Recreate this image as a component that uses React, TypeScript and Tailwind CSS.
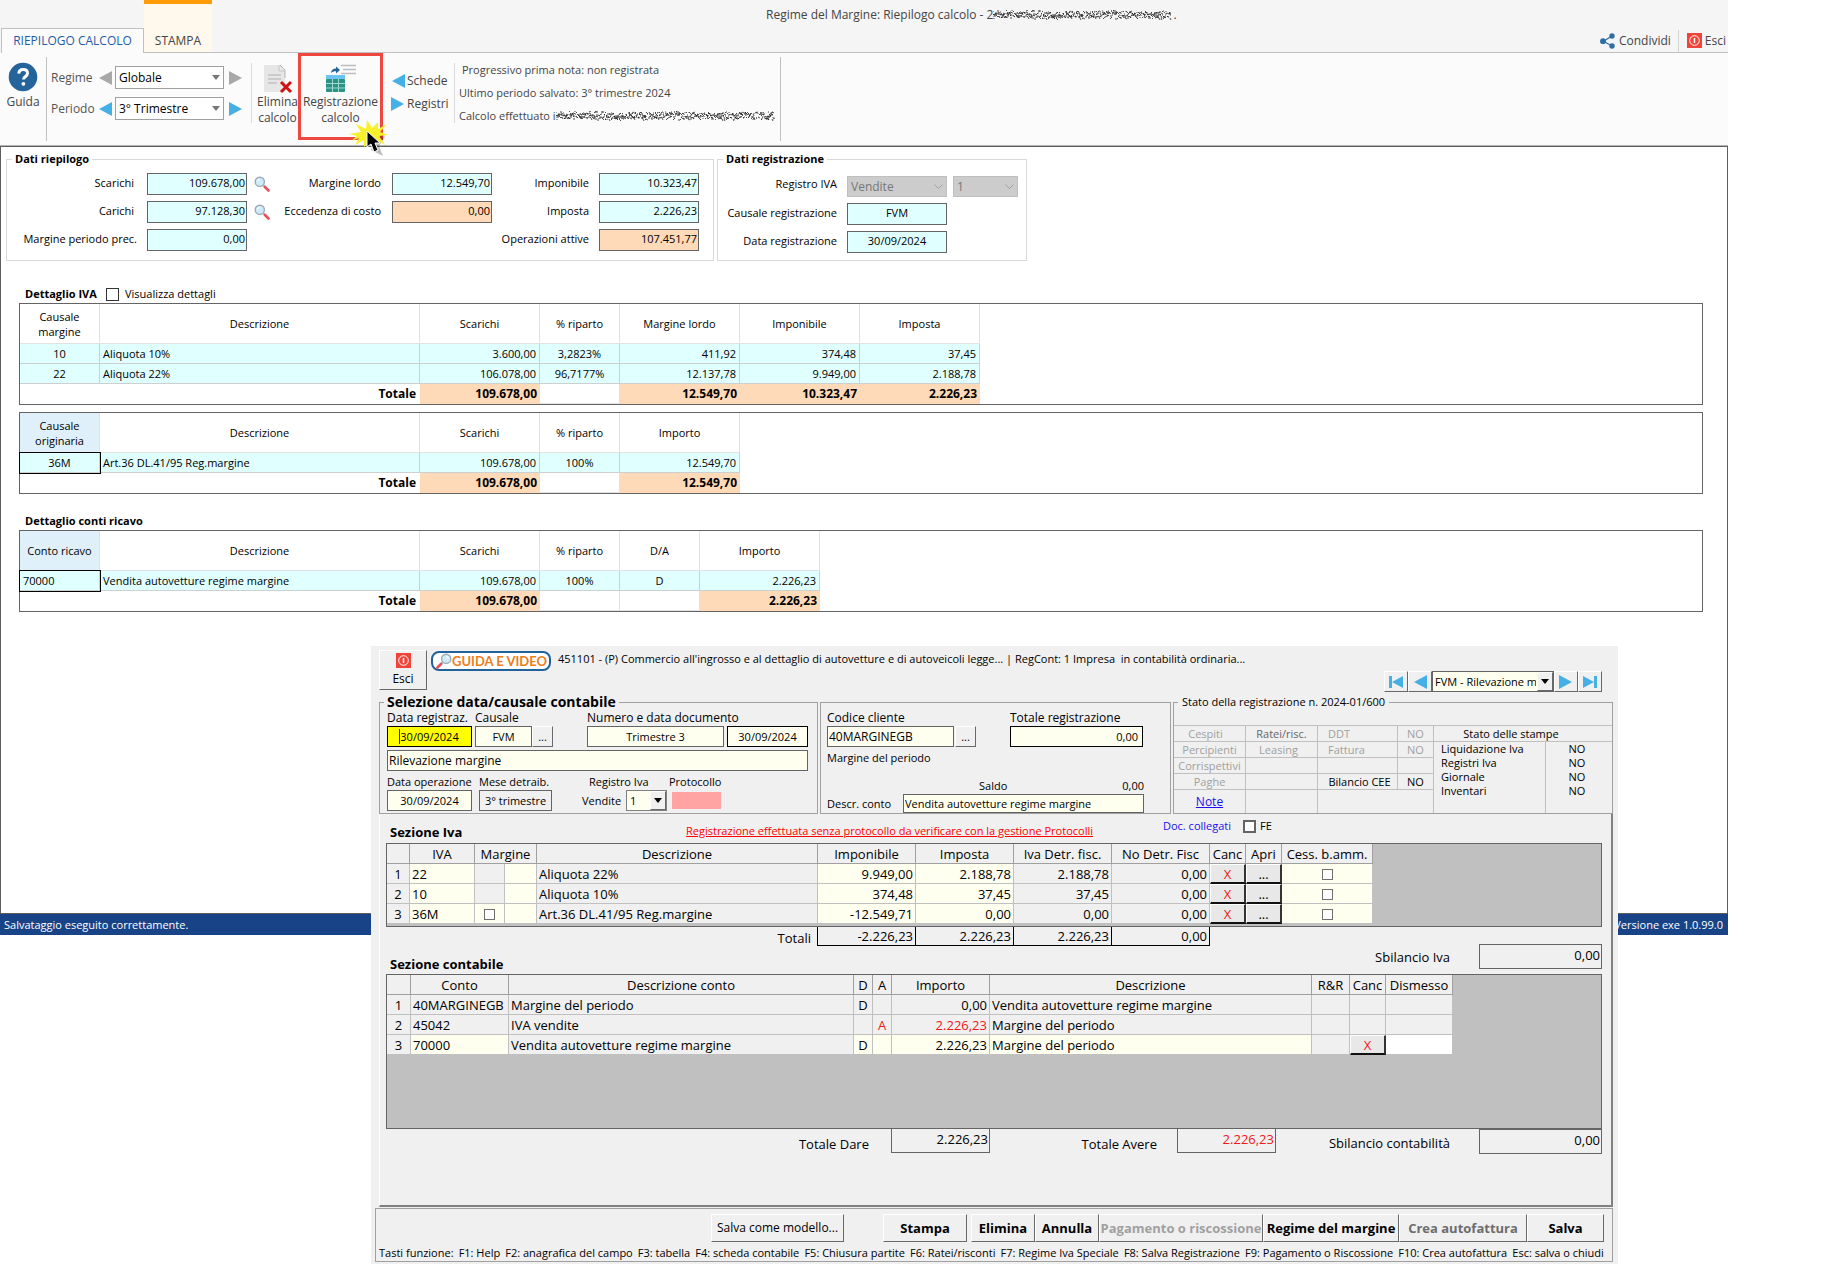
import React from 'react';

type Align = 'left' | 'center' | 'right';

const alignClass: Record<Align, string> = {
  left: 'text-left',
  center: 'text-center',
  right: 'text-right',
};

const raised = 'border border-t-white border-l-white border-r-[#696969] border-b-[#696969] bg-[#f0f0f0]';

/* ---------- Icons ---------- */

function Arrow({ dir, color = '#45b0e6', bar = false }: { dir: 'left' | 'right'; color?: string; bar?: boolean }) {
  return (
    <svg width="16" height="14" viewBox="0 0 16 14" className={dir === 'left' ? 'shrink-0' : 'shrink-0 rotate-180'} aria-hidden="true">
      <path d={bar ? 'M15 1v12L4 7z' : 'M15 0v14L2 7z'} fill={color} />
      {bar && <rect x="1" y="1" width="3" height="12" fill={color} />}
    </svg>
  );
}

function Magnifier() {
  return (
    <svg width="16" height="16" viewBox="0 0 16 16" aria-hidden="true">
      <path d="M9.500 9.500l2 2" stroke="#9aa7b0" strokeWidth="2" />
      <path d="M11 11l3.500 3.500" stroke="#e8505b" strokeWidth="2.600" strokeLinecap="round" />
      <circle cx="5.800" cy="5.800" r="4.600" fill="#cfeaf8" stroke="#9aa9b5" strokeWidth="1.400" />
      <path d="M3.500 5.200c.4-1.200 1.300-1.800 2.400-1.900" stroke="#fff" strokeWidth="1.200" fill="none" />
    </svg>
  );
}

// Same lens, handle pointing the other way
function GuideMagnifier() {
  return (
    <span className="-scale-x-100">
      <Magnifier />
    </span>
  );
}

function PowerIcon() {
  return (
    <svg width="15" height="15" viewBox="0 0 15 15" className="shrink-0" aria-hidden="true">
      <rect width="15" height="15" fill="#f0433a" />
      <circle cx="7.500" cy="7.500" r="4.800" fill="none" stroke="#fff" strokeWidth="1" />
      <path d="M7.500 5v5" stroke="#fff" strokeWidth="1.500" />
    </svg>
  );
}

function HelpIcon() {
  return (
    <svg width="30" height="30" viewBox="0 0 30 30" aria-hidden="true">
      <circle cx="15" cy="15" r="14.300" fill="#25639b" />
      <path d="M10.800 11.600c.1-2.600 1.900-4.100 4.400-4.100 2.600 0 4.300 1.400 4.300 3.700 0 3.200-4 3.300-4 6.300" fill="none" stroke="#fff" strokeWidth="3" />
      <circle cx="15.400" cy="21.800" r="1.900" fill="#fff" />
    </svg>
  );
}

function ShareIcon() {
  return (
    <svg width="16" height="16" viewBox="0 0 16 16" aria-hidden="true">
      <path d="M12 3L3.500 8.200 12 13" fill="none" stroke="#2a6ea5" strokeWidth="1.200" />
      <circle cx="12" cy="3" r="2.700" fill="#2a6ea5" />
      <circle cx="3" cy="8.200" r="2.900" fill="#2a6ea5" />
      <circle cx="12" cy="13" r="2.700" fill="#2a6ea5" />
    </svg>
  );
}

function DeleteDocIcon() {
  return (
    <svg width="30" height="30" viewBox="0 0 30 30" aria-hidden="true">
      <path d="M1 1h16l5 5v22H1z" fill="#e6e6e6" />
      <path d="M17 1l5 5v8" fill="none" stroke="#b5b5b5" />
      <path d="M16 1v6h6" fill="none" stroke="#c8c8c8" />
      <path d="M5 11h13M5 15h13M5 19h9" stroke="#b3adb3" />
      <path d="M18 18l10 10M28 18L18 28" stroke="#d31010" strokeWidth="3" />
    </svg>
  );
}

function RegisterIcon() {
  return (
    <svg width="32" height="30" viewBox="0 0 32 30" aria-hidden="true">
      <path d="M16 1.500h15M18 5.500h13M16 9.500h15" stroke="#b9bcc0" strokeWidth="1.400" />
      <path d="M6 9c.3-3 2-4.500 5-4.500V2.500l4 3.500-4 3.500V7.300C9 7.200 7.500 7.700 6 9z" fill="#25639b" />
      <rect x="1" y="11" width="19" height="4" fill="#6cc5f0" />
      <rect x="1" y="15" width="19" height="13" rx="1" fill="#2a9385" />
      <path d="M1 19.500h19M1 24h19M7.500 15v13M13.500 15v13" stroke="#9fd8cf" />
    </svg>
  );
}

function ClickBurst() {
  return (
    <svg width="42" height="38" viewBox="0 0 42 38" className="absolute left-[49px] top-[66px] z-10" aria-hidden="true">
      <path d="M30 10l8 8-6 9 4 10-12-6z" fill="#000" opacity=".25" />
      <path
        d="M2 15l12-2-5-8 10 5 1-9 5 8 6-6 0 7 9-5-7 8 8 3-9 1 6 9-9-5-1 8-5-7-6 6 0-7-9 5 4-7-8 3 6-5z"
        fill="#f7f02a"
      />
      <path d="M20 12v16l4-3 3 8 4-2-3-7h5z" fill="#000" stroke="#fff" strokeWidth="1" />
    </svg>
  );
}

// Dense strokes used to black out private text
function Scribble({ width }: { width: number }) {
  let state = 12345;
  const rand = () => {
    state = (Math.imul(state, 1664525) + 1013904223) >>> 0;
    return state / 4294967296;
  };
  const strokes: string[] = [];
  for (let x = 0; x < width - 2; x++) {
    for (let n = 0; n < 3; n++) {
      const y = Math.round(rand() * 7) + 1;
      strokes.push(`M${x} ${y}l${Math.round(rand() * 2)} ${Math.round(rand() * 3 - 1)}`);
    }
  }
  return (
    <svg width={width} height="11" viewBox={`0 0 ${width} 11`} className="shrink-0" aria-hidden="true">
      <path d={strokes.join('')} stroke="#222" strokeWidth="0.800" fill="none" />
    </svg>
  );
}

/* ---------- Small controls ---------- */

function Caret({ className = '' }: { className?: string }) {
  return (
    <svg width="8" height="5" viewBox="0 0 8 5" className={className} aria-hidden="true">
      <path d="M0 0h8L4 5z" fill="currentColor" />
    </svg>
  );
}

function RibbonSelect({ label, value, prev }: { label: string; value: string; prev: string }) {
  const id = `rib-${label}`;
  return (
    <div className="flex items-center h-[23px]">
      <label htmlFor={id} className="w-[46px] text-[#555]">{label}</label>
      <button type="button" aria-label={`${label} precedente`}><Arrow dir="left" color={prev} /></button>
      <div className="relative ml-[2px] mr-1">
        <select id={id} className="appearance-none w-[109px] h-[23px] border border-[#a0a0a0] bg-white pl-[3px] text-black">
          <option>{value}</option>
        </select>
        <Caret className="absolute right-1 top-[9px] text-[#777]" />
      </div>
      <button type="button" aria-label={`${label} successivo`}><Arrow dir="right" color={prev} /></button>
    </div>
  );
}

function Field({ id, label, value, labelClass, tone = 'bg-[#e0ffff]', align = 'right', zoom = false }: {
  id: string; label: string; value: string; labelClass: string; tone?: string; align?: Align; zoom?: boolean;
}) {
  return (
    <div className="flex items-center h-[22px]">
      <label htmlFor={id} className={`${labelClass} pb-[2px] text-right whitespace-nowrap`}>{label}</label>
      <input id={id} defaultValue={value} className={`w-[100px] h-[22px] border border-[#646464] px-[1px] pb-1 ${tone} ${alignClass[align]}`} />
      {zoom && <button type="button" aria-label={`Cerca ${label}`} className="ml-[7px]"><Magnifier /></button>}
    </div>
  );
}

/* ---------- Summary grids ---------- */

interface SummaryCol {
  label: string;
  width: number;
  align: Align;
}

function SummaryTable({ cols, rows, totals, focusFirst = false }: {
  cols: SummaryCol[]; rows: string[][]; totals: string[]; focusFirst?: boolean;
}) {
  const width = cols.reduce((sum, c) => sum + c.width, 0);
  return (
    <div className="border border-[#646464]">
      <table className="table-fixed border-separate border-spacing-0" style={{ width }}>
        <colgroup>{cols.map((c, i) => <col key={i} style={{ width: c.width }} />)}</colgroup>
        <thead>
          <tr className="h-10">
            {cols.map((c, i) => (
              <th key={i} className={`border-r border-b border-[#e2e2e2] font-normal leading-[15px] p-0 ${focusFirst && i === 0 ? 'bg-[#dff0fa]' : ''}`}>
                {c.label}
              </th>
            ))}
          </tr>
        </thead>
        <tbody>
          {rows.map((row) => (
            <tr key={row[0]} className="h-5 bg-[#e0ffff]">
              {row.map((cell, i) => (
                <td key={i} className={`border-r border-b border-[#ccd0d0] leading-[19px] py-0 px-[3px] whitespace-nowrap ${alignClass[cols[i].align]} ${focusFirst && i === 0 ? 'outline outline-black' : ''}`}>
                  {cell}
                </td>
              ))}
            </tr>
          ))}
          <tr className="h-5 text-xs font-bold">
            <td colSpan={2} className="text-right leading-[19px] pt-0 pb-px pr-1">Totale</td>
            {totals.map((t, i) => (
              <td key={i} className={`text-right leading-[19px] pt-0 px-[3px] ${t ? 'pb-px bg-[#ffdab9]' : 'pb-0 border-r border-b border-[#e2e2e2]'}`}>{t}</td>
            ))}
          </tr>
        </tbody>
      </table>
    </div>
  );
}

const baseCols = (first: string, firstAlign: Align = 'center'): SummaryCol[] => [
  { label: first, width: 80, align: firstAlign },
  { label: 'Descrizione', width: 320, align: 'left' },
  { label: 'Scarichi', width: 120, align: 'right' },
  { label: '% riparto', width: 80, align: 'center' },
];

/* ---------- Main window ---------- */

function Ribbon() {
  return (
    <header className="text-xs text-[#444]">
      <div className="flex h-[53px] bg-[#f5f5f5]">
        <nav className="flex items-end pl-px">
          <button type="button" className="relative h-[25px] w-[143px] border border-b-0 border-[#c0c0c0] bg-[#fbfbfb] text-[#1f5ba6]">RIEPILOGO CALCOLO</button>
          <button type="button" className="h-[53px] w-[68px] border-t-4 border-t-[#ff9c08] border-b border-b-[#c0c0c0] bg-[#fff8ec] pt-[26px]">STAMPA</button>
        </nav>
        <div className="flex-1 flex justify-between border-b border-[#c0c0c0] pl-[554px]">
          <h1 className="flex h-[30px] items-center whitespace-pre">Regime del Margine: Riepilogo calcolo - 2<Scribble width={180} />.</h1>
          <div className="flex items-center self-end h-[23px] pr-[2px]">
            <button type="button" className="flex items-center gap-[3px] pr-[7px]"><ShareIcon />Condividi</button>
            <button type="button" className="flex items-center gap-[3px] border-l border-[#d4d4d4] pl-2 h-[22px]"><PowerIcon />Esci</button>
          </div>
        </div>
      </div>
      <div className="flex items-start h-[93px] bg-[#fbfbfb] border-b border-[#b4b4b4]">
        <button type="button" className="flex w-[46px] flex-col items-center pt-[9px] leading-[16px]">
          <HelpIcon /><span className="mt-[2px]">Guida</span>
        </button>
        <div className="mt-1 h-[84px] w-px bg-[#c0c0c0]" />
        <div className="flex flex-col gap-2 pl-1 pr-[7px] pt-[13px]">
          <RibbonSelect label="Regime" value="Globale" prev="#a8a8a8" />
          <RibbonSelect label="Periodo" value="3° Trimestre" prev="#45b0e6" />
        </div>
        <div className="mt-[10px] h-[60px] w-px bg-[#dadada]" />
        <button type="button" className="flex w-[46px] flex-col items-center pl-[5px] pt-[11px] leading-[16px] whitespace-nowrap">
          <DeleteDocIcon /><span>Elimina</span><span>calcolo</span>
        </button>
        <div className="relative w-[85px]">
          <button type="button" className="flex w-full h-[87px] flex-col items-center border-[3px] border-[#ee4740] pt-2 leading-[16px] whitespace-nowrap">
            <RegisterIcon /><span>Registrazione</span><span>calcolo</span>
          </button>
          <ClickBurst />
        </div>
        <div className="flex flex-col gap-[7px] pl-[7px] w-[71px] pt-5 leading-[16px]">
          <button type="button" className="flex items-center gap-px"><Arrow dir="left" />Schede</button>
          <button type="button" className="flex items-center gap-px"><Arrow dir="right" />Registri</button>
        </div>
        <div className="mt-[10px] h-[60px] w-px bg-[#dadada]" />
        <div className="flex flex-col gap-[7px] pl-1 pt-[9px] w-[325px] text-[11px] leading-[16px] whitespace-nowrap">
          <p className="pl-[3px]">Progressivo prima nota: non registrata</p>
          <p>Ultimo periodo salvato: 3° trimestre 2024</p>
          <p className="flex items-center">Calcolo effettuato i<Scribble width={220} /></p>
        </div>
        <div className="mt-1 h-[84px] w-px bg-[#c0c0c0]" />
      </div>
    </header>
  );
}

function MainWindow() {
  return (
    <div className="mr-[102px]">
      <Ribbon />
      <main className="border border-[#5e5e5e] pt-1 pb-[301px]">
        <div className="flex gap-[3px] pl-[5px]">
          <fieldset className="flex border border-[#d9d9d9] pt-[6px] pb-[9px] pr-[14px]">
            <legend className="ml-[5px] h-4 px-[3px] font-bold leading-4">Dati riepilogo</legend>
            <div className="flex">
              <div className="flex flex-col gap-[6px]">
                <Field id="scarichi" label="Scarichi" value="109.678,00" labelClass="w-[127px] mr-[13px]" zoom />
                <Field id="carichi" label="Carichi" value="97.128,30" labelClass="w-[127px] mr-[13px]" zoom />
                <Field id="marg-prec" label="Margine periodo prec." value="0,00" labelClass="w-[130px] mr-[10px]" />
              </div>
              <div className="flex flex-col gap-[6px]">
                <Field id="marg-lordo" label="Margine lordo" value="12.549,70" labelClass="w-[111px] mr-[11px]" />
                <Field id="eccedenza" label="Eccedenza di costo" value="0,00" labelClass="w-[111px] mr-[11px]" tone="bg-[#ffdab9]" />
              </div>
              <div className="flex flex-col gap-[6px]">
                <Field id="imponibile" label="Imponibile" value="10.323,47" labelClass="w-[97px] mr-[10px]" />
                <Field id="imposta" label="Imposta" value="2.226,23" labelClass="w-[97px] mr-[10px]" />
                <Field id="op-attive" label="Operazioni attive" value="107.451,77" labelClass="w-[97px] mr-[10px]" tone="bg-[#ffdab9]" />
              </div>
            </div>
          </fieldset>
          <fieldset className="border border-[#d9d9d9] pt-[9px] pr-2">
            <legend className="ml-[5px] h-4 px-[3px] font-bold leading-4">Dati registrazione</legend>
            <div className="flex flex-col gap-[6px]">
              <div className="flex items-start h-[21px] text-xs text-[#777]">
                <label htmlFor="registro" className="w-[119px] mr-[10px] text-right text-[11px] leading-4 text-black">Registro IVA</label>
                <div className="relative mr-[6px]">
                  <select id="registro" disabled className="appearance-none w-[100px] h-[21px] border border-[#bfbfbf] bg-[#ccc] pl-[3px]">
                    <option>Vendite</option>
                  </select>
                  <svg width="9" height="6" viewBox="0 0 9 6" className="absolute right-1 top-2" aria-hidden="true"><path d="M0.500 0.500l4 4 4-4" fill="none" stroke="#a0a0a0" /></svg>
                </div>
                <div className="relative">
                  <select disabled aria-label="Numero registro" className="appearance-none w-[65px] h-[21px] border border-[#bfbfbf] bg-[#ccc] pl-[3px]">
                    <option>1</option>
                  </select>
                  <svg width="9" height="6" viewBox="0 0 9 6" className="absolute right-1 top-2" aria-hidden="true"><path d="M0.500 0.500l4 4 4-4" fill="none" stroke="#a0a0a0" /></svg>
                </div>
              </div>
              <Field id="causale-reg" label="Causale registrazione" value="FVM" labelClass="w-[119px] mr-[10px]" align="center" />
              <Field id="data-reg" label="Data registrazione" value="30/09/2024" labelClass="w-[119px] mr-[10px]" align="center" />
            </div>
          </fieldset>
        </div>

        <div className="pl-[18px] pr-6 pt-[25px]">
          <div className="flex items-center h-4 mb-px pl-[6px]">
            <h2 className="w-[81px] font-bold whitespace-nowrap">Dettaglio IVA</h2>
            <label className="flex items-center gap-[6px]">
              <input type="checkbox" className="appearance-none size-[13px] border border-[#333] bg-white" />
              Visualizza dettagli
            </label>
          </div>
          <SummaryTable
            cols={[
              ...baseCols('Causale margine'),
              { label: 'Margine lordo', width: 120, align: 'right' },
              { label: 'Imponibile', width: 120, align: 'right' },
              { label: 'Imposta', width: 120, align: 'right' },
            ]}
            rows={[
              ['10', 'Aliquota 10%', '3.600,00', '3,2823%', '411,92', '374,48', '37,45'],
              ['22', 'Aliquota 22%', '106.078,00', '96,7177%', '12.137,78', '9.949,00', '2.188,78'],
            ]}
            totals={['109.678,00', '', '12.549,70', '10.323,47', '2.226,23']}
          />
          <div className="mt-[7px]">
            <SummaryTable
              focusFirst
              cols={[...baseCols('Causale originaria'), { label: 'Importo', width: 120, align: 'right' }]}
              rows={[['36M', 'Art.36 DL.41/95 Reg.margine', '109.678,00', '100%', '12.549,70']]}
              totals={['109.678,00', '', '12.549,70']}
            />
          </div>
          <h2 className="mt-[19px] mb-px h-4 pl-[6px] font-bold leading-4">Dettaglio conti ricavo</h2>
          <SummaryTable
            focusFirst
            cols={[
              ...baseCols('Conto ricavo', 'left'),
              { label: 'D/A', width: 80, align: 'center' },
              { label: 'Importo', width: 120, align: 'right' },
            ]}
            rows={[['70000', 'Vendita autovetture regime margine', '109.678,00', '100%', 'D', '2.226,23']]}
            totals={['109.678,00', '', '', '2.226,23']}
          />
        </div>
      </main>
      <footer className="flex h-[21px] items-center justify-between bg-[#184487] pl-1 pr-[5px] text-white">
        <span>Salvataggio eseguito correttamente.</span>
        <span>Versione exe 1.0.99.0</span>
      </footer>
    </div>
  );
}

/* ---------- Accounting entry window ---------- */

function NavButton({ label, children }: { label: string; children: React.ReactNode }) {
  return (
    <button type="button" aria-label={label} className={`flex h-[21px] w-6 items-center justify-center ${raised}`}>{children}</button>
  );
}

function EntryHeader() {
  return (
    <div className="flex h-12 items-start pl-2 pr-4 pt-1">
      <button type="button" className={`flex h-10 w-12 shrink-0 flex-col items-center pt-[2px] text-xs ${raised}`}>
        <PowerIcon /><span className="mt-[2px] leading-[18px]">Esci</span>
      </button>
      <button type="button" className="ml-1 mt-px flex h-5 w-[120px] shrink-0 items-center rounded-lg border-2 border-[#22629c] bg-white pl-[3px] font-[Lato] text-[13px] font-bold leading-4 text-[#ee7d18] whitespace-nowrap">
        <GuideMagnifier />GUIDA E VIDEO
      </button>
      <p className="ml-[7px] mt-[1px] leading-4 whitespace-pre">451101 - (P) Commercio all'ingrosso e al dettaglio di autovetture e di autoveicoli legge... | RegCont: 1 Impresa  in contabilità ordinaria...</p>
      <div className="ml-auto mt-[21px] flex shrink-0">
        <NavButton label="Primo"><Arrow dir="left" bar /></NavButton>
        <NavButton label="Precedente"><Arrow dir="left" /></NavButton>
        <div className="relative">
          <select aria-label="Registrazione" className="appearance-none h-[21px] w-[122px] overflow-hidden border border-[#646464] bg-[#fffff0] pl-[2px] pr-[17px]">
            <option>FVM - Rilevazione margine</option>
          </select>
          <span className={`pointer-events-none absolute right-[1px] top-[1px] flex h-[19px] w-4 items-center justify-center ${raised}`}><Caret /></span>
        </div>
        <NavButton label="Successivo"><Arrow dir="right" /></NavButton>
        <NavButton label="Ultimo"><Arrow dir="right" bar /></NavButton>
      </div>
    </div>
  );
}

function StackField({ id, label, value, width, className, align = 'center', labelSize = 'text-xs' }: {
  id: string; label: string; value: string; width: string; className: string; align?: Align; labelSize?: string;
}) {
  return (
    <div className={`flex flex-col ${width}`}>
      <label htmlFor={id} className={`h-4 whitespace-nowrap ${labelSize}`}>{label}</label>
      <input id={id} defaultValue={value} className={`h-[21px] w-full border px-1 ${className} ${alignClass[align]}`} />
    </div>
  );
}

function DateAndCausale() {
  return (
    <fieldset className="w-[439px] border border-[#a0a0a0] pl-[7px]">
      <legend className="-ml-[3px] h-4 px-[3px] text-sm font-bold leading-4">Selezione data/causale contabile</legend>
      <div className="flex items-end">
        <div className="relative">
          <StackField id="data-registraz" label="Data registraz." value="30/09/2024" width="w-[85px]" className="border-black bg-[#ffff00]" />
          <span className="absolute bottom-[3px] left-[12px] h-[15px] w-px bg-[#2010f0]" />
        </div>
        <div className="ml-[3px] flex items-end">
          <StackField id="causale" label="Causale" value="FVM" width="w-[57px]" className="border-[#646464] bg-[#fffff0]" />
          <button type="button" className={`h-[21px] w-[21px] leading-3 ${raised}`}>...</button>
        </div>
        <div className="ml-[34px] flex items-end gap-[3px]">
          <StackField id="num-doc" label="Numero e data documento" value="Trimestre 3" width="w-[137px]" className="border-[#646464] bg-[#fffff0]" />
          <input aria-label="Data documento" defaultValue="30/09/2024" className="h-[21px] w-[81px] border border-black bg-[#fffff0] text-center" />
        </div>
      </div>
      <input aria-label="Descrizione" defaultValue="Rilevazione margine" className="mt-[3px] block h-[21px] w-[421px] border border-[#646464] bg-[#fffff0] px-px text-xs" />
      <div className="mt-[3px] flex items-end">
        <StackField id="data-op" label="Data operazione" value="30/09/2024" width="w-[85px]" className="border-[#646464] bg-[#fffff0]" labelSize="text-[11px]" />
        <div className="ml-[7px]">
          <StackField id="mese" label="Mese detraib." value="3° trimestre" width="w-[73px]" className="border-[#646464] bg-[#f0f0f0]" labelSize="text-[11px]" />
        </div>
        <div className="ml-[30px] w-[85px]">
          <label htmlFor="registro-iva" className="block h-4 pl-[7px] leading-4">Registro Iva</label>
          <div className="flex items-center">
            <span className="w-11">Vendite</span>
            <div className="relative">
              <select id="registro-iva" className="block h-[21px] w-[41px] appearance-none border border-[#808080] bg-[#fffff0] pl-[3px]">
                <option>1</option>
              </select>
              <span className={`pointer-events-none absolute right-[1px] top-[1px] flex h-[19px] w-4 items-center justify-center ${raised}`}><Caret /></span>
            </div>
          </div>
        </div>
        <div className="ml-[2px]">
          <label htmlFor="protocollo" className="block h-4 leading-4">Protocollo</label>
          <input id="protocollo" className="mx-[3px] my-[2px] block h-[17px] w-[49px] bg-[#ffa3a3]" />
        </div>
      </div>
    </fieldset>
  );
}

function ClientPanel() {
  return (
    <div className="mt-2 w-[351px] border border-[#a0a0a0] pl-[6px] pt-[7px]">
      <div className="flex items-end">
        <StackField id="cliente" label="Codice cliente" value="40MARGINEGB" align="left" width="w-[127px]" className="border-[#646464] bg-[#fffff0] pl-px text-xs" />
        <button type="button" className={`ml-px h-[21px] w-[21px] leading-3 ${raised}`}>...</button>
        <div className="ml-[34px]">
          <StackField id="totale-reg" label="Totale registrazione" value="0,00" align="right" width="w-[133px]" className="border-black bg-[#fffff0]" />
        </div>
      </div>
      <p className="mt-[3px] h-4 leading-4">Margine del periodo</p>
      <div className="mt-3 flex h-4 w-[317px] pl-[152px] leading-4">
        <span>Saldo</span><span className="ml-auto">0,00</span>
      </div>
      <div className="flex items-center">
        <label htmlFor="descr-conto" className="w-[76px]">Descr. conto</label>
        <input id="descr-conto" defaultValue="Vendita autovetture regime margine" className="h-[19px] w-[241px] border border-[#646464] bg-[#fffff0] px-px" />
      </div>
    </div>
  );
}

function StatusPanel() {
  const cell = 'border-b border-r border-[#c0c0c0] p-0 leading-[15px]';
  return (
    <fieldset className="flex-1 border border-[#a0a0a0]">
      <legend className="ml-1 h-4 px-1 leading-4">Stato della registrazione n. 2024-01/600</legend>
      <div className="mt-[15px] flex border-t border-[#c0c0c0]">
        <table className="w-[260px] table-fixed border-separate border-spacing-0 text-[#a0a0a0]">
          <colgroup>
            <col className="w-[72px]" /><col className="w-[72px]" /><col className="w-20" /><col className="w-9" />
          </colgroup>
          <tbody>
            <tr className="h-4 text-center">
              <td className={`${cell} pr-2`}>Cespiti</td><td className={`${cell} text-[#666]`}>Ratei/risc.</td>
              <td className={`${cell} pl-[10px] text-left`}>DDT</td><td className={cell}>NO</td>
            </tr>
            <tr className="h-4 text-center">
              <td className={cell}>Percipienti</td><td className={`${cell} pr-[6px]`}>Leasing</td>
              <td className={`${cell} pl-[10px] text-left`}>Fattura</td><td className={cell}>NO</td>
            </tr>
            <tr className="h-4 text-center">
              <td className={cell}>Corrispettivi</td><td className={cell} /><td className={cell} /><td className={cell} />
            </tr>
            <tr className="h-4 text-center">
              <td className={cell}>Paghe</td><td className={cell} />
              <td className={`${cell} pl-1 text-black whitespace-nowrap`}>Bilancio CEE</td><td className={`${cell} text-black`}>NO</td>
            </tr>
            <tr className="h-[23px] text-center">
              <td className="border-r border-[#c0c0c0] p-0 leading-4"><a href="#note" className="text-xs text-[#2010f0] underline">Note</a></td>
              <td className="border-r border-[#c0c0c0]" />
              <td colSpan={2} className="border-r border-[#c0c0c0]" />
            </tr>
          </tbody>
        </table>
        <table className="flex-1 border-separate border-spacing-0 self-start">
          <thead>
            <tr><th colSpan={2} className="h-4 border-b border-[#c0c0c0] p-0 pr-6 font-normal leading-[15px]">Stato delle stampe</th></tr>
          </thead>
          <tbody>
            {['Liquidazione Iva', 'Registri Iva', 'Giornale', 'Inventari'].map((name) => (
              <tr key={name} className="h-[14px]">
                <td className="w-28 border-r border-[#c0c0c0] p-0 pl-[7px] leading-[14px]">{name}</td>
                <td className="p-0 pr-1 text-center leading-[14px]">NO</td>
              </tr>
            ))}
            <tr className="h-[15px]"><td className="border-r border-[#c0c0c0]" /><td /></tr>
          </tbody>
        </table>
      </div>
    </fieldset>
  );
}

const th = 'h-5 border-r border-b border-[#a0a0a0] bg-[#f0f0f0] p-0 pt-[2px] font-normal leading-[17px] whitespace-nowrap';
const td = 'h-5 border-r border-b border-[#c0c0c0] pt-px pb-0 px-[2px] leading-[18px] whitespace-nowrap';
const cellButton = 'block h-5 w-full border-t border-l border-r-2 border-b-2 border-t-white border-l-white border-r-[#333] border-b-[#111] bg-[#e8e8e8] leading-4';

const ivaRows = [
  { code: '22', text: 'Aliquota 22%', values: ['9.949,00', '2.188,78', '2.188,78', '0,00'] },
  { code: '10', text: 'Aliquota 10%', values: ['374,48', '37,45', '37,45', '0,00'] },
  { code: '36M', text: 'Art.36 DL.41/95 Reg.margine', values: ['-12.549,71', '0,00', '0,00', '0,00'] },
];

function IvaTable() {
  return (
    <div className="border border-[#646464] bg-[#c0c0c0] pb-[2px] text-[13px]">
      <table className="w-[986px] table-fixed border-separate border-spacing-0 bg-[#f0f0f0]">
        <colgroup>
          <col className="w-[23px]" /><col className="w-[65px]" /><col className="w-[30px]" /><col className="w-[32px]" />
          <col className="w-[281px]" /><col className="w-[98px]" /><col className="w-[98px]" /><col className="w-[98px]" />
          <col className="w-[98px]" /><col className="w-[36px]" /><col className="w-[36px]" /><col className="w-[91px]" />
        </colgroup>
        <thead>
          <tr>
            <th className={th} /><th className={th}>IVA</th><th className={th} colSpan={2}>Margine</th><th className={th}>Descrizione</th>
            <th className={th}>Imponibile</th><th className={th}>Imposta</th><th className={th}>Iva Detr. fisc.</th>
            <th className={th}>No Detr. Fisc</th><th className={th}>Canc</th><th className={th}>Apri</th><th className={th}>Cess. b.amm.</th>
          </tr>
        </thead>
        <tbody>
          {ivaRows.map((row, n) => (
            <tr key={row.code}>
              <td className={`${td} text-center`}>{n + 1}</td>
              <td className={`${td} bg-[#fffff0]`}>{row.code}</td>
              <td className={`${td} ${n === 2 ? 'bg-[#fffff0]' : ''}`}>
                {n === 2 && <input type="checkbox" aria-label="Margine" className="mx-auto block size-[11px] appearance-none border border-[#707070] bg-white" />}
              </td>
              <td className={`${td} bg-[#fffff0]`} />
              <td className={td}>{row.text}</td>
              {row.values.map((v, i) => (
                <td key={i} className={`${td} text-right ${i < 2 ? 'bg-[#fffff0]' : ''}`}>{v}</td>
              ))}
              <td className="p-0"><button type="button" aria-label="Cancella riga" className={`${cellButton} text-[#f01818]`}>X</button></td>
              <td className="p-0"><button type="button" className={cellButton}>...</button></td>
              <td className={`${td} bg-[#fffff0]`}>
                <input type="checkbox" aria-label="Cessione bene ammortizzabile" className="mx-auto block size-[11px] appearance-none border border-[#707070] bg-white" />
              </td>
            </tr>
          ))}
        </tbody>
      </table>
    </div>
  );
}

const contoRows = [
  { conto: '40MARGINEGB', text: 'Margine del periodo', side: 'D', amount: '0,00', note: 'Vendita autovetture regime margine' },
  { conto: '45042', text: 'IVA vendite', side: 'A', amount: '2.226,23', note: 'Margine del periodo' },
  { conto: '70000', text: 'Vendita autovetture regime margine', side: 'D', amount: '2.226,23', note: 'Margine del periodo' },
];

function ContoTable() {
  return (
    <div className="border border-[#646464] bg-[#c0c0c0] pb-[73px] text-[13px]">
      <table className="w-[1066px] table-fixed border-separate border-spacing-0 bg-[#f0f0f0]">
        <colgroup>
          <col className="w-[24px]" /><col className="w-[98px]" /><col className="w-[345px]" /><col className="w-[19px]" /><col className="w-[19px]" />
          <col className="w-[98px]" /><col className="w-[322px]" /><col className="w-[38px]" /><col className="w-[36px]" /><col className="w-[67px]" />
        </colgroup>
        <thead>
          <tr>
            {['', 'Conto', 'Descrizione conto', 'D', 'A', 'Importo', 'Descrizione', 'R&R', 'Canc', 'Dismesso'].map((h, i) => (
              <th key={i} className={th}>{h}</th>
            ))}
          </tr>
        </thead>
        <tbody>
          {contoRows.map((row, n) => {
            const edit = n === 2 ? 'bg-[#fffff0]' : '';
            const red = row.side === 'A' ? 'text-[#f01818]' : '';
            return (
              <tr key={row.conto}>
                <td className={`${td} text-center`}>{n + 1}</td>
                <td className={`${td} ${edit} overflow-hidden`}>{row.conto}</td>
                <td className={td}>{row.text}</td>
                <td className={`${td} ${edit} text-center`}>{row.side === 'D' ? 'D' : ''}</td>
                <td className={`${td} ${edit} ${red} text-center`}>{row.side === 'A' ? 'A' : ''}</td>
                <td className={`${td} ${edit} ${red} text-right`}>{row.amount}</td>
                <td className={`${td} ${edit}`}>{row.note}</td>
                <td className={td} />
                {n === 2 ? (
                  <td className="p-0"><button type="button" aria-label="Cancella riga" className={`${cellButton} text-[#f01818]`}>X</button></td>
                ) : <td className={td} />}
                <td className={`${td} ${n === 2 ? 'bg-white' : ''}`} />
              </tr>
            );
          })}
        </tbody>
      </table>
    </div>
  );
}

function EntryBody() {
  return (
    <section className="ml-2 mr-[5px] border-l border-r-2 border-b-2 border-l-white border-r-[#808080] border-b-[#808080] pl-[6px] pr-[9px] pb-[51px]">
      <div className="flex h-[29px] items-end pl-1">
        <h2 className="w-[296px] pb-px text-[13px] font-bold leading-5">Sezione Iva</h2>
        <a href="#protocolli" className="w-[477px] pb-1 text-[#f00] underline">Registrazione effettuata senza protocollo da verificare con la gestione Protocolli</a>
        <a href="#documenti" className="w-20 self-start pt-[4px] leading-4 text-[#2010f0] whitespace-nowrap">Doc. collegati</a>
        <label className="flex items-center gap-1 self-start pt-1 leading-4">
          <input type="checkbox" className="size-[13px] appearance-none border-2 border-[#646464] bg-white" />FE
        </label>
      </div>
      <IvaTable />
      <div className="flex h-[47px] justify-between text-[13px]">
        <div>
          <div className="flex h-[19px]">
            <span className="w-[431px] pr-[6px] pt-px text-right leading-5">Totali</span>
            {['-2.226,23', '2.226,23', '2.226,23', '0,00'].map((v, i) => (
              <output key={i} className={`h-[19px] border-r border-b border-black pr-[2px] text-right leading-[19px] ${i === 0 ? 'w-[99px] border-l' : 'w-[98px]'}`}>{v}</output>
            ))}
          </div>
          <h2 className="pl-1 mt-2 text-[13px] font-bold leading-5">Sezione contabile</h2>
        </div>
        <div className="flex pt-[17px]">
          <label htmlFor="sbil-iva" className="mr-[29px] pt-[5px]">Sbilancio Iva</label>
          <output id="sbil-iva" className="h-[25px] w-[123px] border border-[#646464] pr-px text-right leading-[21px]">0,00</output>
        </div>
      </div>
      <ContoTable />
      <div className="flex text-[13px]">
        <label htmlFor="tot-dare" className="w-[483px] pt-[7px] text-right">Totale Dare</label>
        <output id="tot-dare" className="ml-[22px] h-6 w-[99px] border border-t-0 border-[#646464] pr-px text-right leading-[21px]">2.226,23</output>
        <label htmlFor="tot-avere" className="w-[167px] pt-[7px] text-right">Totale Avere</label>
        <output id="tot-avere" className="ml-5 h-6 w-[99px] border border-t-0 border-[#646464] pr-px text-right leading-[21px] text-[#f01818]">2.226,23</output>
        <label htmlFor="sbil-cont" className="ml-auto mr-[29px] pt-[6px]">Sbilancio contabilità</label>
        <output id="sbil-cont" className="h-[25px] w-[123px] border border-[#646464] pr-px text-right leading-[21px]">0,00</output>
      </div>
    </section>
  );
}

const functionKeys = [
  'Tasti funzione:', 'F1: Help', 'F2: anagrafica del campo', 'F3: tabella', 'F4: scheda contabile', 'F5: Chiusura partite',
  'F6: Ratei/risconti', 'F7: Regime Iva Speciale', 'F8: Salva Registrazione', 'F9: Pagamento o Riscossione', 'F10: Crea autofattura',
  'Esc: salva o chiudi',
];

function EntryFooter() {
  return (
    <footer className="ml-1 mr-[5px] mt-px mb-[2px] border border-[#a0a0a0] pl-[3px] pr-2 pt-[5px]">
      <div className="flex h-7 justify-end text-[13px] font-bold whitespace-nowrap">
        <button type="button" className={`w-[133px] text-xs font-normal ${raised}`}>Salva come modello...</button>
        <button type="button" className={`ml-[39px] mr-1 w-[84px] ${raised}`}>Stampa</button>
        <button type="button" className={`w-16 ${raised}`}>Elimina</button>
        <button type="button" className={`w-16 ${raised}`}>Annulla</button>
        <button type="button" disabled className={`w-[164px] text-[#a0a0a0] ${raised}`}>Pagamento o riscossione</button>
        <button type="button" className={`w-[136px] ${raised}`}>Regime del margine</button>
        <button type="button" className={`w-[128px] text-[#6d6d6d] ${raised}`}>Crea autofattura</button>
        <button type="button" className={`w-[77px] ${raised}`}>Salva</button>
      </div>
      <div className="mt-[3px] flex h-4 justify-between leading-4 whitespace-nowrap">
        {functionKeys.map((k) => <span key={k}>{k}</span>)}
      </div>
    </footer>
  );
}

function EntryWindow() {
  return (
    <div className="absolute left-[371px] right-[212px] top-[646px] bg-[#f0f0f0]">
      <EntryHeader />
      <div className="ml-2 mr-[5px] flex h-[120px] gap-[2px]">
        <DateAndCausale />
        <ClientPanel />
        <StatusPanel />
      </div>
      <EntryBody />
      <EntryFooter />
    </div>
  );
}

export default function App() {
  return (
    <div className="relative bg-white pb-[335px] font-['Open_Sans',sans-serif] text-[11px] leading-4 text-black">
      <MainWindow />
      <EntryWindow />
    </div>
  );
}
